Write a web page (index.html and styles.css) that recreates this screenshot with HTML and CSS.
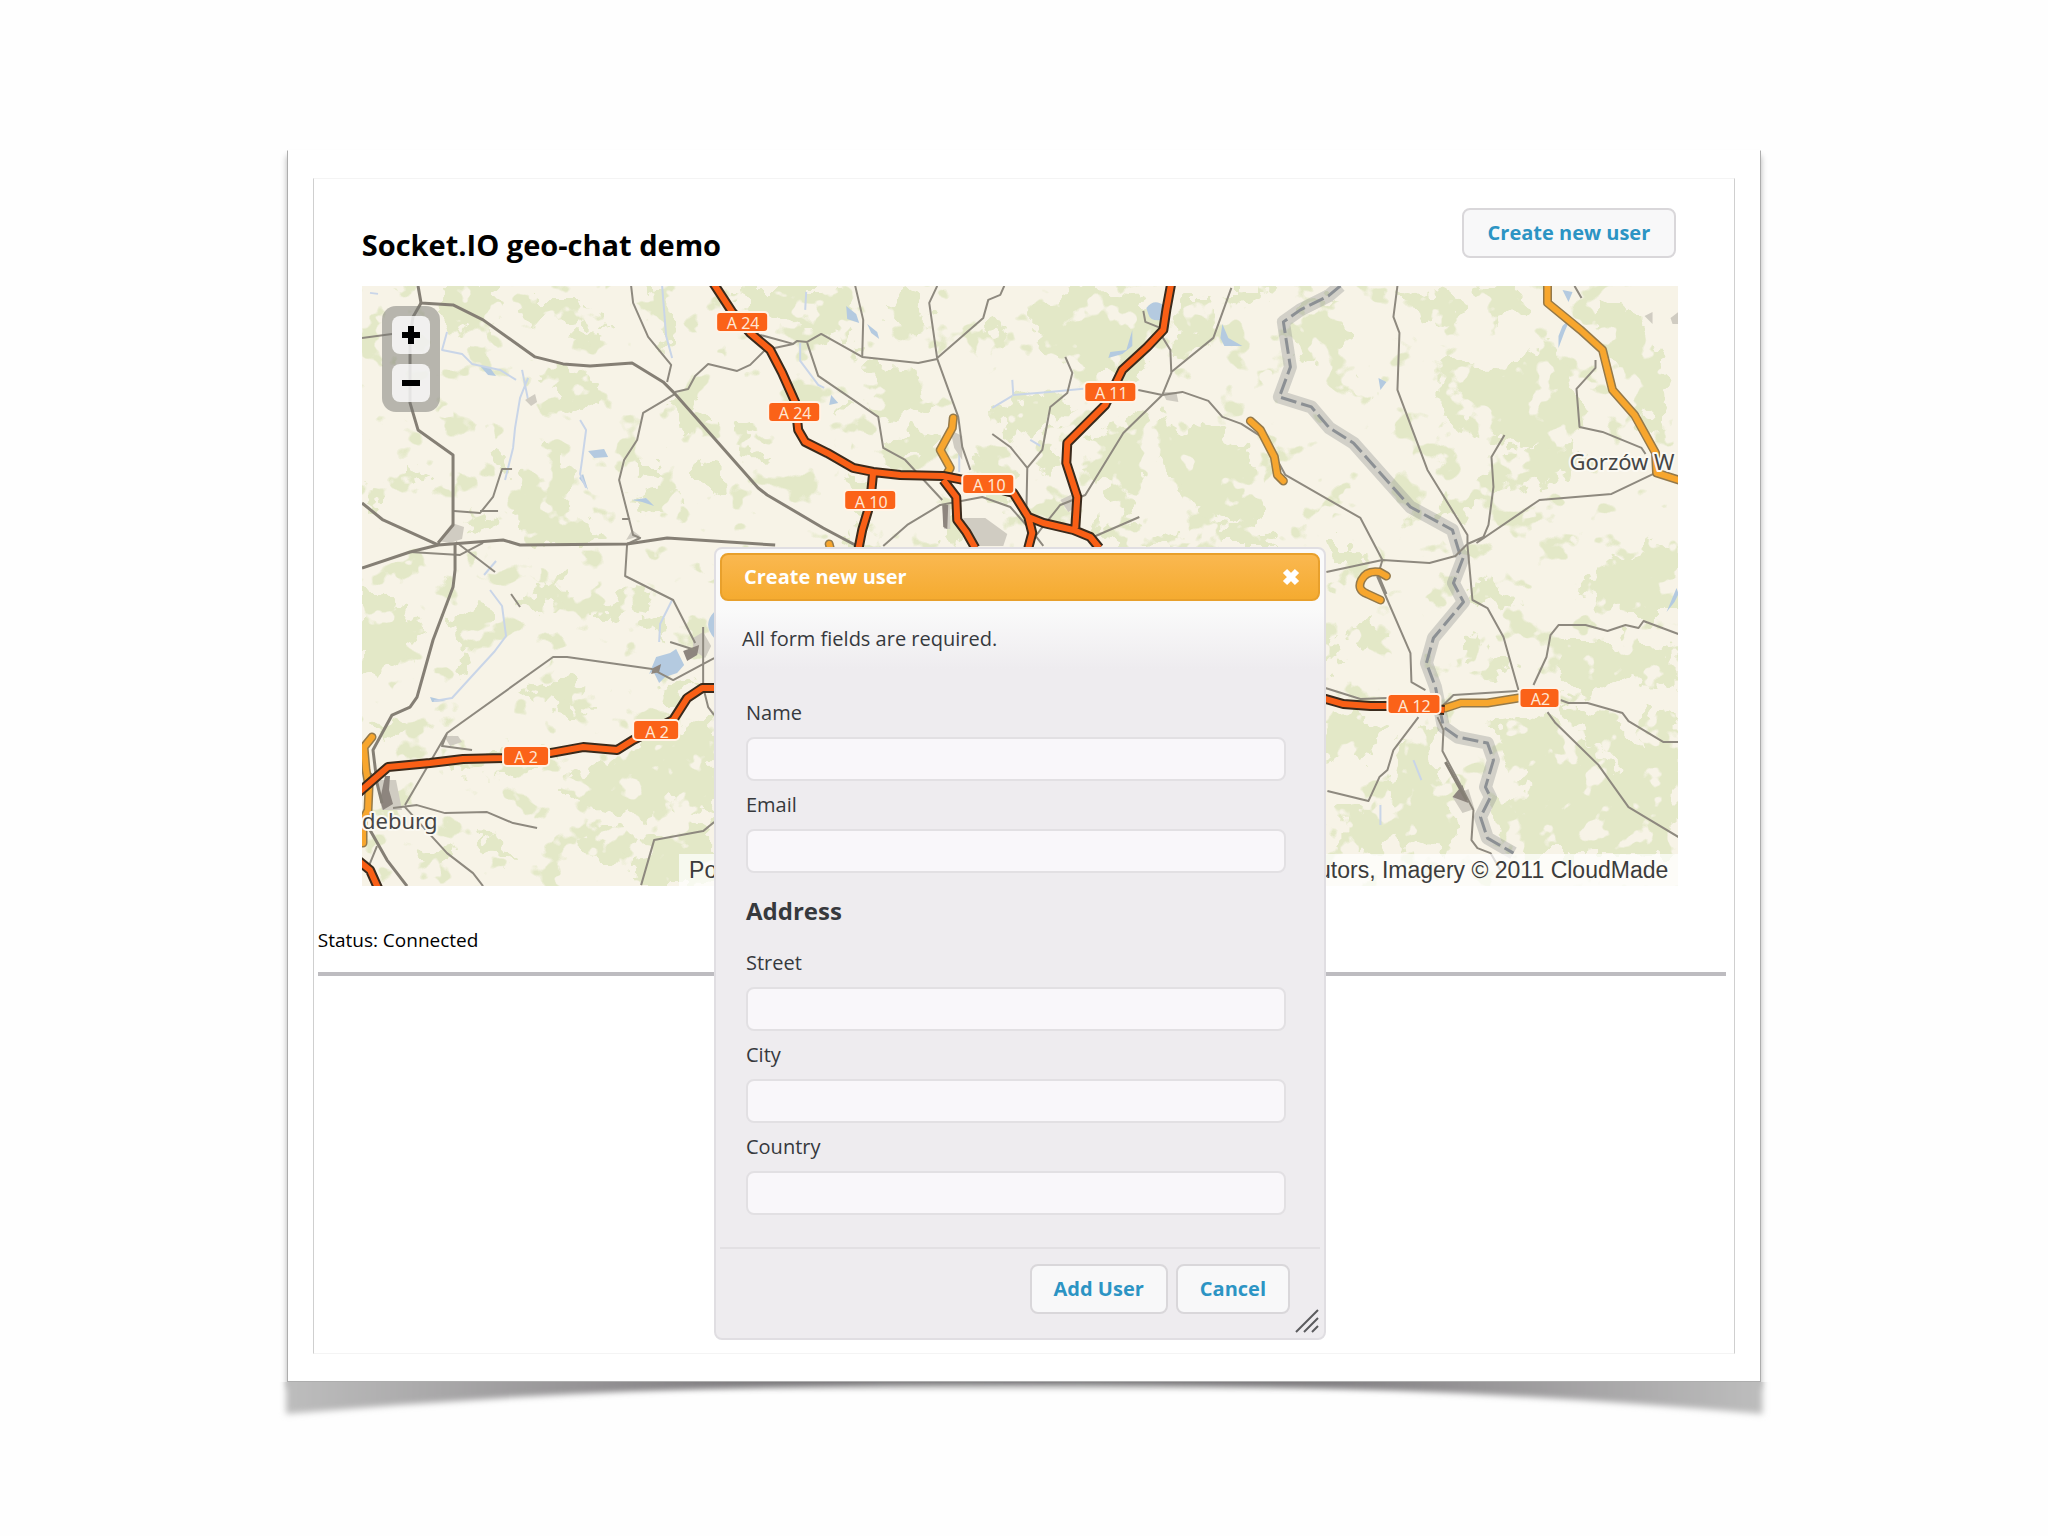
FILE: index.html
```html
<!DOCTYPE html>
<html lang="en">
  <head>
    <meta charset="UTF-8" />
    <meta name="viewport" content="width=device-width, initial-scale=1.0" />
    <title>Socket.IO geo-chat demo</title>
    <link rel="stylesheet" href="styles.css">
  </head>
  <body>
    <div class="frame">
      <div class="sheet">
        <div class="page">
          <div class="header">
            <h1>Socket.IO geo-chat demo</h1>
            <button id="createUserBtn" class="btn" type="button">Create new user</button>
          </div>

          <div id="map" class="map">
            <svg class="tiles" viewBox="362 286 1316 600" preserveAspectRatio="xMidYMid slice" aria-hidden="true">
              <defs>
                <filter id="rough" x="-5%" y="-5%" width="110%" height="110%">
                  <feTurbulence type="fractalNoise" baseFrequency="0.05" numOctaves="3" seed="7" />
                  <feDisplacementMap in="SourceGraphic" scale="40" xChannelSelector="R" yChannelSelector="G" />
                </filter>
                <!-- Small scattered woods -->
                <filter id="woods" x="0" y="0" width="100%" height="100%" color-interpolation-filters="sRGB">
                  <feTurbulence type="fractalNoise" baseFrequency="0.028 0.034" numOctaves="3" seed="21" />
                  <feColorMatrix values="0 0 0 0 0.89  0 0 0 0 0.91  0 0 0 0 0.78  18 0 0 0 -11" />
                </filter>
                <!-- Fields cut into the forests -->
                <filter id="fields" x="0" y="0" width="100%" height="100%" color-interpolation-filters="sRGB">
                  <feTurbulence type="fractalNoise" baseFrequency="0.036 0.04" numOctaves="3" seed="4" />
                  <feColorMatrix values="0 0 0 0 0.968  0 0 0 0 0.953  0 0 0 0 0.906  18 0 0 0 -10.8" />
                </filter>
                <path id="trunkRoads" d="M1547 286L1547 303 1580 330 1602 350 1612 390 1634 415 1655 453 1656 473 1678 480M1250 421L1260 430 1274 457 1277 475 1283 481M953 418L952 428 940 450 950 468 946 475M1445 708L1460 703 1487 703 1518 698M1386 576L1379 572Q1366 570 1361 580T1367 594L1380 600M372 737L364 747 366 770 369 787 368 810 363 820 363 843M829 544L830 548" />
                <path id="motorways" d="M713 283L732 312 750 333 770 350 782 373 795 402 798 430 805 442 827 453 853 468 873 472 900 475 943 476 963 480 1013 493 1028 517 1043 523 1073 530 1090 537 1099 548M873 472L871 492 868 510 862 530 858 550M943 480L956 497 957 520 966 532 975 548M1028 517L1032 533 1028 548M1171 283L1166 310 1163 330 1147 347 1122 370 1105 405 1083 427 1067 443 1066 463 1077 497 1075 528M358 793L373 780 388 767 430 763 463 759 503 758 550 753 583 747 617 750 633 740 673 720 687 698 702 688 716 688M359 861L370 870 379 890M1322 698L1343 704 1370 706 1400 706 1444 710" />
                <path id="stateBorder" d="M1340 286l-12 10-28 14-17 12 7 45-11 30 32 10 18 21 24 15 57 64 42 23 7 23 4 4-10 26 10 19-30 36-7 25 9 24 8 40 14 10 30 6 6 17-8 27 5 10-10 20 7 21 26 15" />
              </defs>
              <rect x="362" y="286" width="1316" height="600" fill="#f7f3e7" />
              <rect x="362" y="286" width="1316" height="600" filter="url(#woods)" />

              <!-- Forests -->
              <g class="forest" filter="url(#rough)">
                <path d="M442 286h50l12 22-20 34-28-8-12-28zM520 300h60l-4 18-46 4zM478 322l16 6-4 12-14-4zM584 300l16 0-6 26-10-2zM574 328l30 2-4 14-18 6zM652 286h14l4 66-14-30z" />
                <path d="M530 362l60 8 14 34-30 6-30-24zM674 396l26 6 16 24-36 4zM736 424l24 14 8 22-24-2-16-18zM700 458l22 6 4 24-20 14-10-20zM636 460l26 0 4 14-28 4zM526 466l24-20 16 20 4 44 34 22-20 22-44-2-22-30zM636 500l44-12 10 16-30 14-24-6zM472 510l24 6-4 14-22-4z" />
                <path d="M370 480l14 8-6 20-14 4zM410 466l20 6-6 8-16-4zM500 448l8 10-6 12-10-4z" />
                <path d="M362 590l30 6 10 16 22 10-14 34-34 20-14-10zM450 616l30-16 10 20-4 22-30 4zM520 600l36-24 14 14-30 26zM600 606l34-18 20 10-22 18-32 6zM520 690l50-14 14 16-40 14zM452 668l18-20 6 14-14 18zM372 732l12-14 18 4-10 20zM440 764l36-12 60-6 20 16-50 10-60 2z" />
                <path d="M566 780l50-28 98-34v96l-40-10-34 14-50-10-24-14zM640 838l74-14v60h-78zM578 836l36-14 20 20-20 24-26-6zM420 850l30-8 4 18-30 6zM476 836l30 4 8 18-28-2zM556 700l20-8 14 22-20 6zM640 616l24-6 2 28-20-4zM660 690l34-14 4 10-24 20z" />
                <path d="M740 286h110l6 44-34 16-36-30-40 6zM872 364l42 4 12 40-30 12-28-14zM886 300l30-10 10 30-18 14-24-10zM988 330l12-8 6 20-12 12-10-10zM1030 310l60-20 50 4 20 30-24 60-50-10-36-20-20-26zM846 344l14 4-4 12zM846 400l10 8-12 10zM740 434l20 4-12 16zM880 450l34-18 30 4-20 24-30 6zM846 470l18 20 10 30-20-10z" />
                <path d="M990 410l60-22 26 14-26 24-40 10zM1040 440l20-14 2 30-16 20-8-14zM976 456l20 0 20 30-8 22-26-20zM1086 440l60-30 40 24-30 24-32 60-24-34zM940 520l26 0-8 26-18-6zM850 520l14 6-4 20-18-8zM1090 520l30 4 70 16-40 8-40-6z" />
                <path d="M1180 300l34 0-14 50-24 10zM1290 330l50-20 10 26-50 26zM1222 286h50l-20 18-28-4zM1160 440l40-10 34 10 34 40-30 40-50-10zM1300 310l30-16 20 20-10 34-40-4zM1190 520l60 4 26 22-70 0zM1320 544l30 0 20 20-40 0zM1248 470l16 30-10 30-16-20z" />
                <path d="M1404 286l60 14-10 26-40-10zM1480 286l40 6 4 20-36 6zM1440 360l60 8 40-20 30 20 20 60-50 20-60-10-40-26zM1360 376l16 10-10 12-10-4zM1500 450l60-4 46 16-60 20-60 10-30 30-26-8 40-30zM1600 300l40 10 14 30 20 40-14 30-40-30-30-40zM1446 490l20 6 0 34-20-20zM1620 380l40 30 10 24-30-14z" />
                <path d="M1600 566l50-20 28-4v74l-50 0-50-20zM1480 570l40 30-20 14-26-10zM1346 632l30-10 14 18-34 6zM1462 656l14-30 8 34-14 14zM1486 640l26 20-6 20-20-10zM1560 640l50 0 68 12v44l-40-20-60 20-20-20zM1492 720l44-10 50 30 40 50 52 44v20h-170l-20-50 40-10-20-40zM1640 700l38 20v60l-40-30zM1560 700l50 14 40 60-60-30zM1610 740l68 20v90l-60-30z" />
                <path d="M1326 720l30-10 24 20-20 30-34-6zM1400 740l30-10 4 40 24 40-10 44-50-10-14-40zM1340 810l50-6 20 34-30 16-40-8zM1326 640l12 0 2 24-12 10z" />
              </g>

              <rect x="362" y="286" width="1316" height="600" filter="url(#fields)" />

              <!-- Water -->
              <g class="lake">
                <path d="M588 451l16-2 4 8-14 1zM846 306l10 8 3 9-12-4zM867 324l10 8 2 7-8-6zM1146 308q8-10 18-2l-2 14q-12 2-14-6zM1132 330l-6 20-16 2-2 6 14-4 10-8zM1222 324l6 14 14 8-18 0-4-8zM1378 378l8 4-6 8zM656 657l14-4 6-4 4 8 4 8-7 8-12 4-6 6-6-12-4 3zM714 612q-12 12 0 26zM1562 290l10 2-4 10zM1562 326l8-8-6 14-6 16 0-12zM583 474l5 16-9-12zM632 500l14-2 8 8-12-4zM831 395l7 8-9 2zM480 366l10 2 6 8-8-1zM430 697l16 4-14 1zM1676 588l-10 24 8-10 4-8z" />
              </g>
              <g class="river">
                <path d="M370 293l8 1M447 332l-5 18 20 4 10 10 28 6 16 10M528 378l-8 20-5 30-2 20-8 32M522 370l6 30M580 420l6 10-4 30-2 14 6 14M662 286l4 50 6 22M490 590l12 16 4 30-12 16-22 24-20 22-18 3M672 600l-12 24-1 18M800 343l0 18 18 24 6 3M1012 380l1 15 36-3 42-4M1012 396l-20 12M806 292l-1 18M1030 440l10 6M484 575l12-14M959 450l0 22M1413 760l8 20M1380 805l0 20" />
              </g>

              <!-- Built-up areas -->
              <g class="town">
                <path d="M438 541l14-18 12 4-2 12-12 4zM626 540l6-10 8 6zM525 400l10-6 2 8-6 4zM950 430l12 6 0 24-8-12zM963 518l22 0 22 16-4 12-26 0-12-14zM1060 500l16-8 4 12-12 8zM1162 392l14 0 2 10-12-2zM1644 316l8-4 0 12zM693 638l10-6 8 14-6 12-12-8zM444 736l14 0 4 6-12 4zM376 780l20 0 6 30-20 0zM942 505l8 0 0 24-6 0zM1452 797l16-8 6 20-12 4zM1670 318l8-6v12l-6 0z" />
                <path class="yard" d="M385 776l5 0-1 14 4 14-10 6-3-10zM683 651l16-6-2 10-10 6zM653 668l8-4-2 8-8 2zM1452 797l10-12 6 18zM942 505l6 0-1 24-4-2z" />
              </g>

              <!-- State border -->
              <use class="border-glow" href="#stateBorder" />
              <use class="border-line" href="#stateBorder" />

              <!-- Railways and minor roads -->
              <g class="rail">
                <path d="M362 338L392 334M454 511L480 513 493 497 502 469 512 469M480 511L498 511M631 286L633 303 648 337 671 365 667 382" />
                <path d="M675 392L688 389 695 376 708 364 737 371 750 365 765 350 793 344 797 341 807 342 821 334 862 357 918 363 937 359M760 335L793 344" />
                <path d="M675 394L643 413 637 440 624 460 619 480 633 535 640 538 627 544 625 576 673 600 695 643M622 519L630 519" />
                <path d="M855 286L863 320 862 357M937 286L929 303 937 359 958 417 962 447 970 470M1004 286L1000 295 988 300 983 318 937 358" />
                <path d="M807 343L818 376 878 417 883 448 905 460 942 500M883 546L907 525 940 505 982 497 1010 507 1033 533 1043 546" />
                <path d="M1065 357L1072 373 1067 393 1050 407 1042 450 1027 468 1026 517M992 434L1010 447 1027 468M1093 537L1139 517M1143 311L1145 322 1160 328" />
                <path d="M1162 337L1170 350 1171 373 1162 395 1123 433 1085 495 1060 505 1040 530 1028 546M1231 288L1213 338 1171 372" />
                <path d="M1138 390L1162 395 1182 392 1208 401 1222 417 1241 424 1266 440 1285 475 1360 518 1382 560 1377 577 1410 653 1411 682 1425 690M1378 575L1386 594" />
                <path d="M1326 572L1382 560 1429 563 1455 556 1467 544 1467 535 1427 470 1397 390 1399 333 1393 317 1397 286M1467 544L1483 537 1488 525 1493 487 1491 457 1504 435M1476 543L1539 500 1611 494 1655 473" />
                <path d="M1595 360L1595 368 1576 389 1579 427 1602 432 1641 448 1645 454M1574 286L1581 298M1467 545L1472 600 1487 608 1503 637 1518 690" />
                <path d="M1678 634L1643 621 1638 628 1625 625 1607 631 1585 625 1558 625 1550 635 1546 657 1533 685M1560 700L1568 703 1587 703 1622 713 1628 721 1663 742 1678 742M1547 712L1555 723 1598 765 1628 807 1678 837" />
                <path d="M1325 688L1360 699 1387 698M1443 705L1453 695 1517 691M1418 717L1393 750 1387 770 1379 777 1368 801 1327 791M1437 717L1443 730 1442 751 1460 785 1473 810 1471 840 1477 848 1490 853 1500 870" />
                <path d="M714 658L673 680 652 669 567 657 553 657 447 733 405 805M447 733L442 746 472 750M703 627L703 687 708 707 714 715M670 642L695 650M393 808L417 805 445 813 487 812 513 823 537 828M405 807L447 853 473 873 483 886" />
                <path d="M641 885L654 840 703 831 714 822M511 594L520 607M410 552L460 555 483 543M456 542L495 572M362 772L372 774M377 846L368 868" />
                <path class="main" d="M418 286L421 303 453 305 483 320 535 357 563 364 590 366 632 363 663 382 675 394 758 488 767 495 823 528 855 545" />
                <path class="main" d="M421 303L413 317 410 337 410 403 418 430 453 455 453 525 438 543M362 503L383 520 438 545 503 540 520 545 627 544 667 538 775 545" />
                <path class="main" d="M455 543L455 570 453 587 433 640 417 697 410 707 392 715 373 750 377 783 382 803M370 830L387 860 407 886M362 568L410 552 438 545M1445 762L1466 800" />
              </g>

              <!-- Main roads, casing first -->
              <use class="trunk-case" href="#trunkRoads" />
              <use class="trunk-fill" href="#trunkRoads" />
              <use class="motorway-case" href="#motorways" />
              <use class="motorway-fill" href="#motorways" />

              <!-- Road shields -->
              <g class="shield">
                <rect x="716" y="312" width="52" height="20" rx="4" /><text x="743" y="329">A 24</text>
                <rect x="768" y="402" width="52" height="20" rx="4" /><text x="795" y="419">A 24</text>
                <rect x="844" y="490" width="52" height="20" rx="4" /><text x="871" y="508">A 10</text>
                <rect x="962" y="474" width="52" height="20" rx="4" /><text x="989" y="491">A 10</text>
                <rect x="1084" y="382" width="52" height="20" rx="4" /><text x="1111" y="399">A 11</text>
                <rect x="503" y="746" width="46" height="20" rx="4" /><text x="526" y="763">A 2</text>
                <rect x="633" y="720" width="46" height="20" rx="4" /><text x="657" y="738">A 2</text>
                <rect x="1387" y="694" width="53" height="20" rx="4" /><text x="1414" y="712">A 12</text>
                <rect x="1519" y="688" width="40" height="20" rx="4" /><text x="1540" y="705">A2</text>
              </g>

              <g class="place">
                <text x="362" y="829">deburg</text>
                <text x="1569" y="470">Gorzów W</text>
              </g>
            </svg>

            <div class="zoom-control">
              <button class="zoom-btn" type="button" aria-label="Zoom in">
                <svg viewBox="0 0 18 18"><path d="M6 0h6v6h6v6h-6v6H6v-6H0V6h6z" /></svg>
              </button>
              <button class="zoom-btn" type="button" aria-label="Zoom out">
                <svg viewBox="0 0 18 18"><path d="M0 6h18v6H0z" /></svg>
              </button>
            </div>

            <div class="attribution">Powered by Leaflet. Map data © 2011 OpenStreetMap contributors, Imagery © 2011 CloudMade</div>
          </div>

          <p id="status" class="status">Status: Connected</p>
          <hr class="divider">
        </div>

        <form id="dialog" class="dialog" role="dialog" aria-labelledby="dialogTitle">
          <div class="dialog-titlebar">
            <h2 id="dialogTitle">Create new user</h2>
            <button class="dialog-close" type="button" aria-label="Close">
              <svg viewBox="0 0 18 18"><path d="M3 3l12 12M15 3L3 15" /></svg>
            </button>
          </div>

          <div class="dialog-content">
            <p class="tips">All form fields are required.</p>
            <div class="fields">
              <label for="name">Name</label>
              <input type="text" id="name" name="name">
              <label for="email">Email</label>
              <input type="text" id="email" name="email">
              <h3>Address</h3>
              <label for="street">Street</label>
              <input type="text" id="street" name="street">
              <label for="city">City</label>
              <input type="text" id="city" name="city">
              <label for="country">Country</label>
              <input type="text" id="country" name="country">
            </div>
          </div>

          <div class="dialog-buttons">
            <button class="btn" type="button">Add User</button>
            <button class="btn" type="button">Cancel</button>
          </div>
          <svg class="resize-grip" viewBox="0 0 24 24" aria-hidden="true">
            <path d="M1 23L23 1M9 23L23 9M17 23L23 17" />
          </svg>
        </form>
      </div>

      <svg class="curl" viewBox="0 0 1474 50" preserveAspectRatio="none" aria-hidden="true">
        <defs>
          <linearGradient id="curlShade">
            <stop offset="0" stop-color="#bdbdbd" />
            <stop offset="0.2" stop-color="#969496" />
            <stop offset="0.5" stop-color="#4e4b50" />
            <stop offset="0.8" stop-color="#969496" />
            <stop offset="1" stop-color="#bdbdbd" />
          </linearGradient>
          <filter id="soft" x="-2%" y="-50%" width="104%" height="200%">
            <feGaussianBlur stdDeviation="3" />
          </filter>
        </defs>
        <path d="M-2 -10H1476V33Q1110 1 737 1T-2 33Z" fill="url(#curlShade)" filter="url(#soft)" />
      </svg>
    </div>
  </body>
</html>
```
FILE: styles.css
```css
:root {
  --link: #2c94c4;
  --text: #36393d;
  --panel: #eeecef;
  --field: #f9f7fa;
  --line: #e2e0e3;
}

* {
  box-sizing: border-box;
}

body {
  margin: 0;
  padding: 150px 0;
  background: #fefefe;
  color: #000;
  font-family: "Open Sans", "Noto Sans", sans-serif;
  font-size: 20px;
  line-height: 24px;
}

h1,
h2,
h3,
p {
  margin: 0;
}

/* Picture frame */
.frame {
  position: relative;
  width: 72%;
  margin: 0 auto;
  padding: 27px 25px;
  background: #fff;
  border: 1px solid #adadad;
  border-top-color: transparent;
  box-shadow: 0 6px 6px rgba(0, 0, 0, 0.3);
}

.sheet {
  display: grid;
  border: 1px solid #f4f4f4;
  border-left-color: #cfcfcf;
  border-right-color: #cfcfcf;
}

.curl {
  position: absolute;
  left: 0;
  top: 100%;
  width: 100%;
  height: 50px;
  overflow: visible;
  clip-path: inset(1px -12px -12px -12px);
}

/* Page */
.page,
.dialog {
  grid-area: 1 / 1;
}

.page {
  padding: 0 8px 0 4px;
}

.header {
  display: flex;
  justify-content: space-between;
  align-items: flex-start;
  height: 107px;
  padding: 29px 50px 0 44px;
}

.header h1 {
  padding-top: 19px;
  font-size: 29px;
  line-height: 36px;
}

.btn {
  height: 50px;
  padding: 0 22px;
  border: 2px solid #d9d7da;
  border-radius: 8px;
  background: #f8f8f9;
  color: var(--link);
  font: bold 20px/24px "Open Sans", "Noto Sans", sans-serif;
  cursor: pointer;
}

.header .btn {
  padding: 0 24px;
}

/* Map */
.map {
  position: relative;
  height: 600px;
  margin: 0 48px 0 44px;
  overflow: hidden;
}

.tiles {
  display: block;
  width: 100%;
  height: 100%;
  stroke-linejoin: round;
}

.forest {
  fill: #e3e8c7;
}

.lake {
  fill: #b4cae0;
}

.river {
  fill: none;
  stroke: #c9d5e8;
  stroke-width: 2;
}

.town {
  fill: #d0ccc2;
}

.yard {
  fill: #8d857e;
}

.border-glow {
  fill: none;
  stroke: #8c9090;
  stroke-opacity: 0.35;
  stroke-width: 13;
}

.border-line {
  fill: none;
  stroke: #8c9094;
  stroke-width: 3;
  stroke-dasharray: 16 5;
}

.rail {
  fill: none;
  stroke: #8e897f;
  stroke-width: 2;
}

.rail .main {
  stroke: #857f75;
  stroke-width: 3;
}

.trunk-case,
.trunk-fill {
  fill: none;
  stroke: #94794a;
  stroke-width: 9;
  stroke-linecap: round;
}

.trunk-fill {
  stroke: #f7a62e;
  stroke-width: 6;
}

.motorway-case,
.motorway-fill {
  fill: none;
  stroke: #3a2a1c;
  stroke-width: 10;
}

.motorway-fill {
  stroke: #f95f16;
  stroke-width: 6;
}

.shield rect {
  fill: #fb6218;
  stroke: #fff3e6;
  stroke-width: 2;
}

.shield text {
  fill: #ffe6d2;
  font: 16px "Noto Sans", sans-serif;
  text-anchor: middle;
}

.place text {
  fill: #454545;
  stroke: #fbf9f2;
  stroke-width: 4;
  paint-order: stroke;
  font: 22px "Noto Sans", sans-serif;
}

.zoom-control {
  position: absolute;
  left: 20px;
  top: 20px;
  display: grid;
  gap: 10px;
  padding: 10px;
  border-radius: 14px;
  background: rgba(120, 120, 115, 0.5);
}

.zoom-btn {
  display: grid;
  place-items: center;
  width: 38px;
  height: 38px;
  padding: 0;
  border: 0;
  border-radius: 8px;
  background: rgba(255, 255, 255, 0.8);
  cursor: pointer;
}

.zoom-btn svg {
  width: 18px;
  height: 18px;
}

.attribution {
  position: absolute;
  right: 0;
  bottom: 0;
  padding: 4px 10px;
  background: rgba(255, 255, 255, 0.72);
  color: #3c3c3c;
  font: 23px/24px "Liberation Sans", Arial, sans-serif;
  white-space: nowrap;
}

.status {
  padding: 42px 0 20px;
  font-size: 19px;
}

.divider {
  height: 4px;
  margin: 0;
  border: 0;
  background: #bdbcc0;
}

/* Dialog */
.dialog {
  position: relative;
  justify-self: center;
  width: 612px;
  margin: 368px 8px 13px 0;
  padding: 4px;
  border: 2px solid #e0dee2;
  border-radius: 8px;
  background: linear-gradient(#fafafa 60px, var(--panel) 120px);
  color: var(--text);
}

.dialog-titlebar {
  display: flex;
  justify-content: space-between;
  align-items: center;
  height: 48px;
  padding: 0 18px 0 22px;
  border: 2px solid #e8a02c;
  border-radius: 8px;
  background: linear-gradient(#fab850, #f5ab30);
  color: #fff;
}

.dialog-titlebar h2 {
  font-size: 20px;
  line-height: 24px;
}

.dialog-close {
  display: grid;
  padding: 0;
  border: 0;
  background: none;
  cursor: pointer;
}

.dialog-close svg {
  width: 18px;
  height: 18px;
  stroke: #fff;
  stroke-width: 6;
}

.dialog-content {
  padding: 26px 34px 20px 22px;
}

.tips {
  padding-bottom: 50px;
}

.fields {
  padding-left: 4px;
}

.fields label {
  display: block;
}

.fields input {
  display: block;
  width: 100%;
  height: 44px;
  margin: 12px 0;
  padding: 8px;
  border: 2px solid var(--line);
  border-radius: 8px;
  background: var(--field);
  color: var(--text);
  font: inherit;
}

.fields h3 {
  padding: 10px 0 24px;
  font-size: 24px;
  line-height: 32px;
}

.dialog-buttons {
  display: flex;
  justify-content: flex-end;
  gap: 8px;
  padding: 15px 30px 20px;
  border-top: 2px solid var(--line);
}

.resize-grip {
  position: absolute;
  right: 5px;
  bottom: 5px;
  width: 24px;
  height: 24px;
  stroke: #5b5b5e;
  stroke-width: 2;
}
```
